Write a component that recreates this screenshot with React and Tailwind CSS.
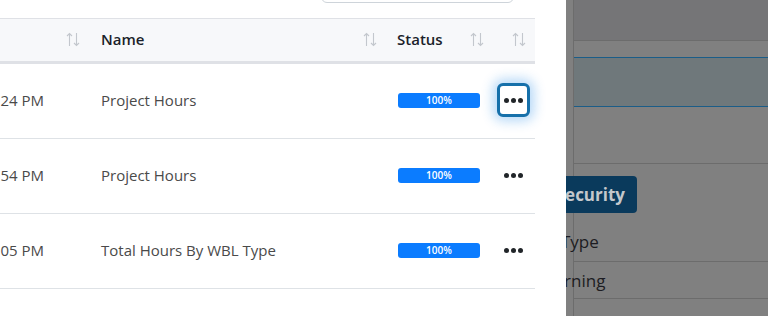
import React from "react";

const FONT = "font-['Open_Sans',_'Liberation_Sans',_sans-serif]";

const ROWS = [
  { time: "02/14/2024 03:41:24 PM", name: "Project Hours", focused: true },
  { time: "02/14/2024 03:38:54 PM", name: "Project Hours" },
  { time: "02/13/2024 11:20:05 PM", name: "Total Hours By WBL Type" },
];

function SortIcon() {
  return (
    <svg width="14" height="15" viewBox="0 0 14 15" fill="none" stroke="#c3c7cd" strokeWidth="1.1">
      <path d="M3.5 14V1.5M1 4l2.5-2.5L6 4" />
      <path d="M10.5 1v12.5M8 11l2.5 2.5L13 11" />
    </svg>
  );
}

function Dots() {
  return (
    <span className="flex items-center gap-[2px]">
      <span className="h-[5px] w-[5px] rounded-full bg-[#212529]" />
      <span className="h-[5px] w-[5px] rounded-full bg-[#212529]" />
      <span className="h-[5px] w-[5px] rounded-full bg-[#212529]" />
    </span>
  );
}

function TablePanel() {
  return (
    <div className="w-[566px] shrink-0 bg-white">
      {/* search box, mostly scrolled out of view */}
      <div className="flex h-[18px] items-start">
        <div className="ml-[321px] -mt-[34px] h-[37px] w-[193px] rounded-md border border-[#ced4da] bg-white" />
      </div>

      <div className="w-[535px]">
        {/* header */}
        <div className="flex h-[46px] items-center border-t border-b-[3px] border-[#dfe1e6] bg-[#f7f8fa] pb-[2px] text-[15px] font-semibold text-[#1b1f2a]">
          <div className="flex w-[89px] justify-end pr-[9px]">
            <SortIcon />
          </div>
          <div className="flex w-[297px] items-center justify-between pl-3 pr-[9px]">
            <span>Name</span>
            <SortIcon />
          </div>
          <div className="flex w-[107px] items-center justify-between pl-[11px] pr-[9px]">
            <span>Status</span>
            <SortIcon />
          </div>
          <div className="flex w-[42px] justify-end pr-[9px]">
            <SortIcon />
          </div>
        </div>

        {/* rows */}
        {ROWS.map((r, i) => (
          <div key={i} className="flex h-[75px] items-center border-b border-[#dee2e6] pb-[2px] text-[15px] text-[#4a4a4a]">
            <div className="w-[89px]">
              <div className="flex w-[44px] justify-end overflow-hidden whitespace-nowrap">{r.time}</div>
            </div>
            <div className="w-[297px] pl-3">{r.name}</div>
            <div className="w-[107px] pl-3">
              <div className="flex h-[15px] w-[82px] items-center justify-center rounded-[3px] bg-[#0b7cff] text-[10px] font-semibold text-white">
                100%
              </div>
            </div>
            <div className="w-[42px] pl-1">
              <button
                className={
                  r.focused
                    ? "flex h-[34px] w-[33px] items-center justify-center rounded-[6px] border-[3px] border-[#1670aa] bg-white shadow-[0_0_12px_4px_rgba(13,125,230,0.3)]"
                    : "flex h-[34px] w-[33px] items-center justify-center rounded-[6px] border-[3px] border-transparent"
                }
              >
                <Dots />
              </button>
            </div>
          </div>
        ))}
      </div>
    </div>
  );
}

function DimmedPage() {
  return (
    <div className="h-[316px] flex-1 overflow-hidden bg-[#808080] pl-[7px]">
      <div className="h-full border-l border-[#6c6c6c]">
        <div className="h-[41px] border-b border-[#6c6c6c] bg-[#757577]" />
        <div className="h-[16px]" />
        <div className="h-[50px] border-y border-[#1b5d88] bg-[#6f787b]" />
        <div className="h-[57px] border-b border-[#6c6c6c]" />
        <div className="flex h-[98px] flex-col border-b border-[#6c6c6c]">
          <div className="pt-[12px]">
            <div className="-ml-[26px] flex h-[37px] w-[89px] items-center justify-end rounded-[4px] bg-[#0a3a5c] pr-[12px] text-[17px] font-bold text-[#c4c8cc]">
              Security
            </div>
          </div>
          <div className="-ml-[53px] mt-[16px] whitespace-nowrap text-[17px] text-[#1c1c22]">WBL Type</div>
        </div>
        <div className="h-[37px] border-b border-[#6c6c6c] pt-[6px]">
          <div className="-ml-[84px] whitespace-nowrap text-[17px] text-[#1c1c22]">Work Learning</div>
        </div>
      </div>
    </div>
  );
}

export default function App() {
  return (
    <div className={`flex h-[316px] w-[768px] overflow-hidden ${FONT}`}>
      <TablePanel />
      <DimmedPage />
    </div>
  );
}
